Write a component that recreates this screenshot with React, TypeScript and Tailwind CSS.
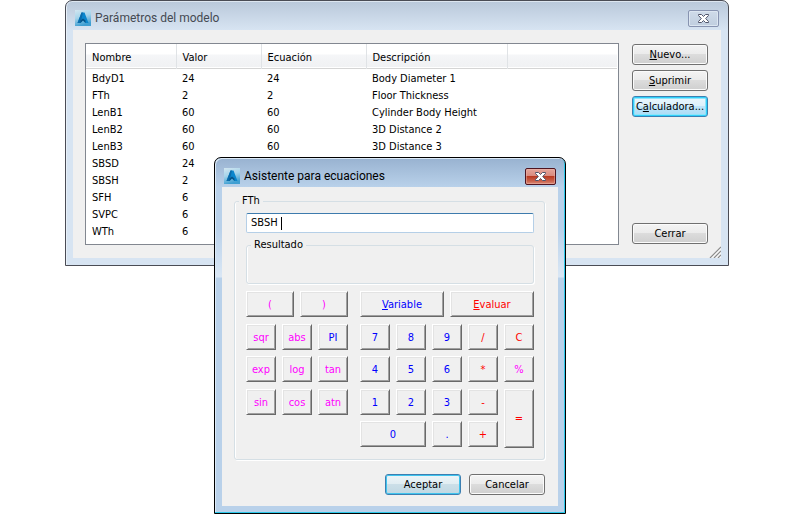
import type { ReactNode } from "react";

const uiFont = "font-['DejaVu_Sans_Condensed','DejaVu_Sans',sans-serif]";
const titleFont = "font-[Roboto,'Open_Sans',sans-serif] text-[12px] leading-4";

type Parameter = { name: string; value: string; equation: string; description: string };

const parameters: Parameter[] = [
  { name: "BdyD1", value: "24", equation: "24", description: "Body Diameter 1" },
  { name: "FTh", value: "2", equation: "2", description: "Floor Thickness" },
  { name: "LenB1", value: "60", equation: "60", description: "Cylinder Body Height" },
  { name: "LenB2", value: "60", equation: "60", description: "3D Distance 2" },
  { name: "LenB3", value: "60", equation: "60", description: "3D Distance 3" },
  { name: "SBSD", value: "24", equation: "", description: "" },
  { name: "SBSH", value: "2", equation: "", description: "" },
  { name: "SFH", value: "6", equation: "", description: "" },
  { name: "SVPC", value: "6", equation: "", description: "" },
  { name: "WTh", value: "6", equation: "", description: "" },
];

function AppIcon() {
  return (
    <svg width="16" height="16" viewBox="0 0 16 16" aria-hidden="true">
      <defs>
        <linearGradient id="tile" x1="0" y1="0" x2="0.3" y2="1">
          <stop offset="0" stopColor="#d3e6f0" />
          <stop offset="0.5" stopColor="#a5d4ea" />
          <stop offset="1" stopColor="#3f9fd2" />
        </linearGradient>
      </defs>
      <rect width="16" height="16" fill="url(#tile)" />
      <path d="M6.500 2.500h3L13.500 13h-3L8 10.500 5.500 13h-3z" fill="#0a86cc" />
      <path d="M6.500 2.500H8L6.500 9l-1 4h-3z" fill="#0a6cab" />
      <path d="M5.500 10.500L8 8.500l2.500 2V13L8 10.500 5.500 13z" fill="#075488" />
    </svg>
  );
}

function CloseGlyph() {
  return (
    <svg width="13" height="11" viewBox="0 0 13 11" aria-hidden="true">
      <path
        d="M1.500 1.500h3L6.500 3.500l2-2h3v1L8.700 5.500l2.800 3v1h-3l-2-2-2 2h-3v-1l2.800-3-2.800-3z"
        fill="#fff"
        stroke="#50556b"
        strokeWidth="1"
        strokeLinejoin="round"
      />
    </svg>
  );
}

function PushButton({ children, tone = "plain" }: { children: ReactNode; tone?: "plain" | "hot" | "default" }) {
  const tones = {
    plain:
      "border-[#707070] bg-[linear-gradient(#f4f4f4,#ebebeb_48%,#dcdcdc_50%,#cfcfcf)] shadow-[inset_0_0_0_1px_#fbfbfb]",
    hot: "border-[#3c7fb1] bg-[linear-gradient(#ebf6fd,#dcf1fc_48%,#bfe5fa_50%,#a9dbf5)] shadow-[inset_0_0_0_1px_#2fd0fa,inset_0_0_0_2px_#8fe4fb]",
    default:
      "border-[#3c7fb1] bg-[linear-gradient(#eef5f8,#e0edf2_48%,#cbdfe8_50%,#c0d8e3)] shadow-[inset_0_0_0_1px_#3fc4ee]",
  };
  return (
    <button
      type="button"
      className={`h-[21px] w-[76px] rounded-[3px] border text-center leading-[18px] whitespace-nowrap ${tones[tone]}`}
    >
      {children}
    </button>
  );
}

const inks = { magenta: "text-[#ff00ff]", blue: "text-[#0000ff]", red: "text-[#ff0000]" };

function CalcKey({ ink, className = "h-[26px]", children }: { ink: keyof typeof inks; className?: string; children: ReactNode }) {
  return (
    <button
      type="button"
      className={`border border-t-white border-r-[#696969] border-b-[#696969] border-l-white bg-[#f0f0f0] text-center leading-none shadow-[inset_1px_1px_0_#e3e3e3,inset_-1px_-1px_0_#a0a0a0] ${inks[ink]} ${className}`}
    >
      {children}
    </button>
  );
}

function ParameterWindow() {
  return (
    <section
      aria-label="Parámetros del modelo"
      className="w-full rounded-t-[7px] border border-[#4a4c55] bg-[#d7e4f2] bg-[linear-gradient(#b9c8da,#d7e4f2_29px)] px-[7px] pb-[7px] shadow-[inset_0_1px_0_#dde6f0,inset_1px_0_0_#e8f0f8]"
    >
      <header className="flex h-[29px] items-center justify-between px-[2px] pt-[5px]">
        <h1 className={`flex items-center gap-1 text-[#454a52] ${titleFont}`}>
          <AppIcon />
          Parámetros del modelo
        </h1>
        <button
          type="button"
          aria-label="Cerrar ventana"
          className="flex h-[17px] w-[31px] items-center justify-center rounded-[2px] border border-[#8793b0] bg-[linear-gradient(#cfdbe9,#c0cedf)] shadow-[inset_0_0_0_1px_#dce6f1]"
        >
          <CloseGlyph />
        </button>
      </header>
      <div className="relative flex gap-[13px] bg-[#f0f0f0] px-3 py-[13px]">
        <div className="min-w-0 flex-1 border border-[#828790] bg-white pr-px pb-1">
          <table className="w-full table-fixed border-collapse text-left">
            <colgroup>
              <col className="w-[90px]" />
              <col className="w-[85px]" />
              <col className="w-[105px]" />
              <col className="w-[141px]" />
              <col />
            </colgroup>
            <thead>
              <tr className="h-[24px] border-b border-[#d5d5d5] bg-[linear-gradient(#ffffff,#ffffff_10px,#f5f6f8_11px,#f0f1f3)]">
                {["Nombre", "Valor", "Ecuación", "Descripción"].map((heading) => (
                  <th key={heading} scope="col" className="border-r border-[#e0e3e6] py-0 pt-[5px] pl-[6px] font-normal leading-4">
                    {heading}
                  </th>
                ))}
                <td />
              </tr>
            </thead>
            <tbody>
              <tr aria-hidden="true" className="h-[2px]" />
              {parameters.map((p) => (
                <tr key={p.name} className="h-[17px]">
                  <td className="py-0 pl-[6px] leading-[17px]">{p.name}</td>
                  <td className="py-0 pl-[6px] leading-[17px]">{p.value}</td>
                  <td className="py-0 pl-[6px] leading-[17px]">{p.equation}</td>
                  <td className="py-0 pl-[6px] leading-[17px] whitespace-nowrap">{p.description}</td>
                  <td />
                </tr>
              ))}
            </tbody>
          </table>
        </div>
        <div className="flex w-[77px] shrink-0 flex-col gap-[5px] py-px">
          <PushButton>
            <u>N</u>uevo...
          </PushButton>
          <PushButton>
            <u>S</u>uprimir
          </PushButton>
          <PushButton tone="hot">
            C<u>a</u>lculadora...
          </PushButton>
          <div className="mt-auto flex">
            <PushButton>Cerrar</PushButton>
          </div>
        </div>
        <svg className="absolute right-0 bottom-0" width="12" height="12" viewBox="0 0 12 12" aria-hidden="true">
          <path d="M2 12L12 2M6 12l6-6M10 12l2-2" stroke="#fff" strokeWidth="1.500" />
          <path d="M1 12L12 1M5 12l7-7M9 12l3-3" stroke="#8c8c8c" strokeWidth="1.200" />
        </svg>
      </div>
    </section>
  );
}

const groupBorder = "min-w-0 rounded-[3px] border border-[#d5dfe5] shadow-[inset_1px_0_0_#fff,1px_1px_0_#fff]";

function EquationAssistant() {
  return (
    <section
      role="dialog"
      aria-label="Asistente para ecuaciones"
      className="absolute top-[157px] left-[149px] w-[352px] rounded-t-[7px] border border-black bg-[linear-gradient(#98b2d0,#b9d1ea_29px,#b9d1ea_70px,#dae7f5_119px,#b9d1ea_120px)] px-[7px] pb-[7px] shadow-[inset_-1px_-1px_0_#2cc8ea,inset_1px_1px_0_#dceaf7]"
    >
      <header className="flex h-[29px] items-center justify-between px-[2px] pt-[7px]">
        <h2 className={`flex items-center gap-1 text-black ${titleFont}`}>
          <AppIcon />
          Asistente para ecuaciones
        </h2>
        <button
          type="button"
          aria-label="Cerrar asistente"
          className="flex h-[17px] w-[31px] items-center justify-center rounded-[2px] border border-[#4e1420] bg-[linear-gradient(#e5a59b,#d98a7e_46%,#b93a22_50%,#c9614b_80%,#dc8a76)] shadow-[inset_0_0_0_1px_#eab5ab80]"
        >
          <CloseGlyph />
        </button>
      </header>
      <form className="bg-[#f0f0f0] pt-[7px] pr-[13px] pb-[11px] pl-3" onSubmit={(e) => e.preventDefault()}>
        <fieldset className={`${groupBorder} pr-[10px] pb-[11px] pl-[11px]`}>
          <legend className="-ml-[7px] px-[3px] leading-[14px]">
            <label htmlFor="equation">FTh</label>
          </legend>
          <div className="mt-[5px] flex h-5 items-center rounded-[2px] border border-[#b5cfe7] border-t-[#3d7bad] bg-white px-1">
            <input
              id="equation"
              type="text"
              defaultValue="SBSH "
              className="field-sizing-content bg-transparent p-0 leading-4 outline-none"
            />
            <span className="h-[13px] w-px bg-black" />
          </div>
          <fieldset className={`${groupBorder} mt-[5px] h-[46px]`}>
            <legend className="ml-[4px] px-[3px] leading-[14px]">Resultado</legend>
            <output aria-label="Resultado" />
          </fieldset>
          <div className="mt-[7px] flex justify-between">
            <div className="flex flex-col">
              <div className="grid h-[33px] grid-cols-[48px_48px] gap-x-[6px]">
                <CalcKey ink="magenta">(</CalcKey>
                <CalcKey ink="magenta">)</CalcKey>
              </div>
              <div className="grid grid-cols-[30px_30px_30px] grid-rows-[32px_33px_26px] gap-x-[6px]">
                <CalcKey ink="magenta">sqr</CalcKey>
                <CalcKey ink="magenta">abs</CalcKey>
                <CalcKey ink="blue">PI</CalcKey>
                <CalcKey ink="magenta">exp</CalcKey>
                <CalcKey ink="magenta">log</CalcKey>
                <CalcKey ink="magenta">tan</CalcKey>
                <CalcKey ink="magenta">sin</CalcKey>
                <CalcKey ink="magenta">cos</CalcKey>
                <CalcKey ink="magenta">atn</CalcKey>
              </div>
            </div>
            <div className="flex flex-col">
              <div className="grid h-[33px] grid-cols-[84px_84px] gap-x-[6px]">
                <CalcKey ink="blue">
                  <u>V</u>ariable
                </CalcKey>
                <CalcKey ink="red">
                  <u>E</u>valuar
                </CalcKey>
              </div>
              <div className="grid grid-cols-[30px_30px_30px_30px_30px] grid-rows-[32px_33px_32px_27px] gap-x-[6px]">
                <CalcKey ink="blue">7</CalcKey>
                <CalcKey ink="blue">8</CalcKey>
                <CalcKey ink="blue">9</CalcKey>
                <CalcKey ink="red">/</CalcKey>
                <CalcKey ink="red">C</CalcKey>
                <CalcKey ink="blue">4</CalcKey>
                <CalcKey ink="blue">5</CalcKey>
                <CalcKey ink="blue">6</CalcKey>
                <CalcKey ink="red">*</CalcKey>
                <CalcKey ink="magenta">%</CalcKey>
                <CalcKey ink="blue">1</CalcKey>
                <CalcKey ink="blue">2</CalcKey>
                <CalcKey ink="blue">3</CalcKey>
                <CalcKey ink="red">-</CalcKey>
                <CalcKey ink="red" className="row-span-2">
                  =
                </CalcKey>
                <CalcKey ink="blue" className="col-span-2 h-[26px]">
                  0
                </CalcKey>
                <CalcKey ink="blue">.</CalcKey>
                <CalcKey ink="red">+</CalcKey>
              </div>
            </div>
          </div>
        </fieldset>
        <div className="mt-[14px] flex justify-end gap-2">
          <PushButton tone="default">Aceptar</PushButton>
          <PushButton>Cancelar</PushButton>
        </div>
      </form>
    </section>
  );
}

export default function App() {
  return (
    <main className={`min-h-screen bg-white px-[65px] text-[11px] text-black ${uiFont}`}>
      <div className="relative mx-auto max-w-[664px]">
        <ParameterWindow />
        <EquationAssistant />
      </div>
    </main>
  );
}
